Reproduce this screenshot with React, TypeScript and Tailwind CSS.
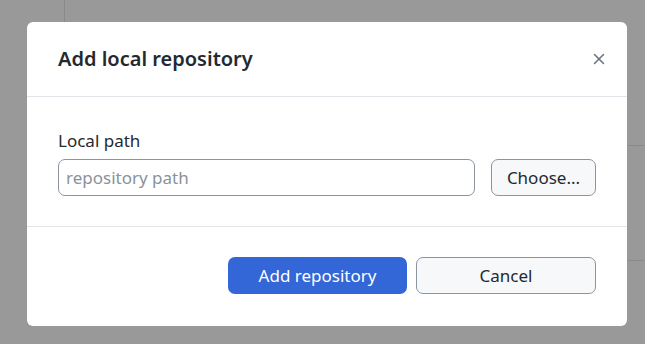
import { X } from "lucide-react";

export default function App() {
  return (
    <div
      className="relative h-[344px] w-[645px] overflow-hidden bg-[#999999]"
      style={{ fontFamily: '"Noto Sans", "Open Sans", sans-serif' }}
    >
      {/* page behind the overlay */}
      <div className="ml-[64px] h-[300px] border-l border-[#8a8a8a]">
        <div className="h-[146px] border-b border-[#8a8a8a]" />
        <div className="h-[115px] border-b border-[#8a8a8a]" />
      </div>

      <AddRepositoryDialog />
    </div>
  );
}

function AddRepositoryDialog() {
  return (
    <div className="absolute left-[27px] top-[22px] w-[600px] overflow-hidden rounded-[6px] bg-white text-[#24292f]">
      <header className="flex h-[75px] items-center justify-between border-b border-[#e1e4e8] pl-[31px] pr-[16px]">
        <h2 className="text-[20px] font-semibold">Add local repository</h2>
        <button type="button" aria-label="Close" className="flex h-6 w-6 items-center justify-center text-[#6a737d]">
          <X size={18} strokeWidth={2} />
        </button>
      </header>

      <div className="border-b border-[#e1e4e8] px-[31px] pb-[30px] pt-[32px]">
        <label className="block text-[17px] leading-[24px]">Local path</label>
        <div className="mt-[6px] flex gap-4">
          <input
            placeholder="repository path"
            className="h-[37px] flex-1 rounded-[7px] border border-[#8c959f] px-[7px] text-[17px] text-[#24292f] outline-none placeholder:text-[#8b929a]"
          />
          <button
            type="button"
            className="h-[37px] w-[105px] rounded-[7px] border border-[#8c959f] bg-[#f6f8fa] text-[17px]"
          >
            Choose...
          </button>
        </div>
      </div>

      <footer className="flex justify-end gap-[9px] px-[31px] pb-[32px] pt-[30px]">
        <button type="button" className="h-[37px] w-[179px] rounded-[7px] bg-[#3366d6] text-[17px] text-white">
          Add repository
        </button>
        <button
          type="button"
          className="h-[37px] w-[180px] rounded-[7px] border border-[#8c959f] bg-[#f6f8fa] text-[17px]"
        >
          Cancel
        </button>
      </footer>
    </div>
  );
}
